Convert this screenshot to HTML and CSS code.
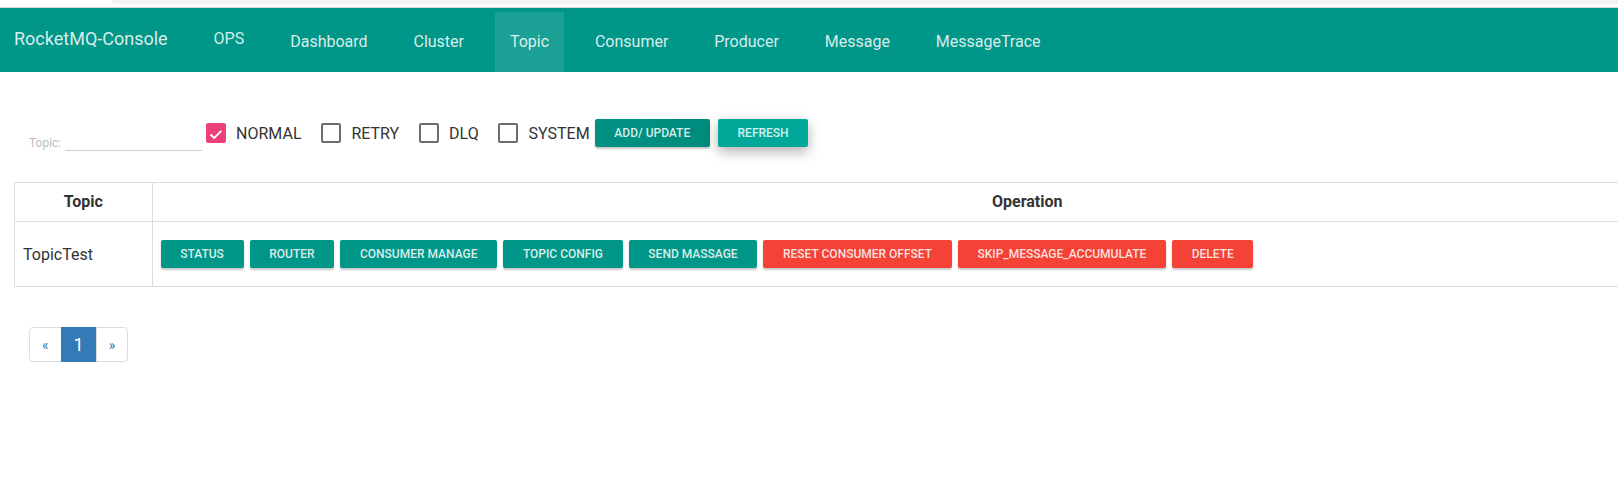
FILE: index.html
```html
<!DOCTYPE html>
<html lang="en">
<head>
<meta charset="utf-8">
<title>RocketMQ-Console</title>
<link rel="stylesheet" href="styles.css">
</head>
<body>
<div class="chrome"><div class="chrome-tab"></div></div>
<nav class="navbar">
  <div class="brand">RocketMQ-Console</div>
  <a class="ops">OPS</a>
  <ul class="nav">
    <li><a>Dashboard</a></li>
    <li><a>Cluster</a></li>
    <li><a class="active">Topic</a></li>
    <li><a>Consumer</a></li>
    <li><a>Producer</a></li>
    <li><a>Message</a></li>
    <li><a>MessageTrace</a></li>
  </ul>
</nav>
<main class="content">
  <div class="filters">
    <div class="field"><label>Topic:</label><span class="input"></span></div>
    <label class="check"><span class="box checked"><svg viewBox="0 0 20 20" width="20" height="20"><polyline points="4.5,11.5 8.2,15 15.3,7.8" fill="none" stroke="#fff" stroke-width="1.8"/></svg></span>NORMAL</label>
    <label class="check"><span class="box"></span>RETRY</label>
    <label class="check"><span class="box"></span>DLQ</label>
    <label class="check last"><span class="box"></span>SYSTEM</label>
    <button class="btn btn-add">ADD/ UPDATE</button>
    <button class="btn btn-refresh">REFRESH</button>
  </div>
  <table class="topics">
    <colgroup><col class="col-topic"><col></colgroup>
    <thead>
      <tr><th>Topic</th><th>Operation</th></tr>
    </thead>
    <tbody>
      <tr>
        <td class="name">TopicTest</td>
        <td class="ops-cell">
          <div class="op-btns">
            <button class="btn">STATUS</button>
            <button class="btn">ROUTER</button>
            <button class="btn">CONSUMER MANAGE</button>
            <button class="btn">TOPIC CONFIG</button>
            <button class="btn">SEND MASSAGE</button>
            <button class="btn danger">RESET CONSUMER OFFSET</button>
            <button class="btn danger">SKIP_MESSAGE_ACCUMULATE</button>
            <button class="btn danger">DELETE</button>
          </div>
        </td>
      </tr>
    </tbody>
  </table>
  <ul class="pagination">
    <li><a class="first">«</a></li>
    <li><a class="active">1</a></li>
    <li><a class="last">»</a></li>
  </ul>
</main>
</body>
</html>
```

FILE: styles.css
```css
html, body {
  margin: 0;
  padding: 0;
  background: #fff;
  overflow: hidden;
  font-family: Roboto, "Liberation Sans", Arial, sans-serif;
}

.chrome {
  height: 8px;
  box-sizing: border-box;
  border-bottom: 1px solid #d6d6d6;
  padding-left: 112px;
}
.chrome-tab {
  height: 4px;
  background: #f1f3f4;
  border-bottom-left-radius: 6px;
}

.navbar {
  display: flex;
  align-items: flex-start;
  height: 64px;
  background: #009688;
  padding-left: 14px;
  color: rgba(255, 255, 255, 0.85);
}
.brand {
  width: 184.6px;
  flex-shrink: 0;
  font-size: 18px;
  line-height: 21px;
  padding-top: 20.3px;
}
.ops {
  padding: 21px 15px 0;
  font-size: 16px;
  line-height: 19px;
}
.nav {
  display: flex;
  gap: 15.9px;
  list-style: none;
  margin: 4px 0 0 16px;
  padding: 0;
}
.nav a {
  display: flex;
  align-items: center;
  height: 60px;
  box-sizing: border-box;
  padding: 0 15px 2px;
  font-size: 16px;
}
.nav a.active {
  background: rgba(255, 255, 255, 0.1);
}

.content {
  padding: 47px 0 0 14px;
}
.filters {
  display: flex;
  align-items: center;
  height: 28px;
  padding-left: 15px;
}
.field {
  display: flex;
  align-items: flex-end;
  align-self: flex-end;
  margin-bottom: -4px;
  margin-right: 4px;
}
.field label {
  font-size: 12px;
  line-height: 14px;
  color: #bdbdbd;
  margin: 0 3.5px 1.4px 0;
}
.field .input {
  width: 137px;
  height: 20px;
  border-bottom: 1px solid #cfcfcf;
}
.check {
  display: flex;
  align-items: center;
  gap: 10.3px;
  margin-right: 19.6px;
  font-size: 16px;
  color: #333;
}
.check.last {
  margin-right: 5px;
}
.box {
  display: block;
  width: 20px;
  height: 20px;
  box-sizing: border-box;
  border: 2px solid #6e6e6e;
  border-radius: 2px;
}
.box.checked {
  background: #ec407a;
  border: 0;
}
.box svg {
  display: block;
}

.btn {
  height: 28px;
  padding: 0 19.7px;
  border: 0;
  border-radius: 2px;
  font-family: Roboto, "Liberation Sans", Arial, sans-serif;
  font-size: 12px;
  font-weight: 500;
  color: rgba(255, 255, 255, 0.85);
  background: #009688;
  box-shadow: 0 2px 2px rgba(0, 0, 0, 0.22);
  white-space: nowrap;
}
.btn.danger {
  background: #f44336;
}
.btn-add {
  background: linear-gradient(90deg, #009282, #008b7d);
  margin-right: 8px;
}
.btn-refresh {
  background: #00a899;
  box-shadow: 0 5px 11px rgba(0, 0, 0, 0.18), 0 4px 15px rgba(0, 0, 0, 0.15);
}

.topics {
  margin-top: 35px;
  border-collapse: collapse;
  table-layout: fixed;
  width: 1889px;
  color: #333;
}
.col-topic {
  width: 137.5px;
}
.topics th {
  padding: 8px;
  font-size: 16px;
  line-height: 22px;
  font-weight: 700;
  border: 1px solid #ddd;
  text-align: center;
}
.topics td {
  border: 1px solid #ddd;
  font-size: 16px;
}
.topics td.name {
  padding: 0 8px;
}
.topics td.ops-cell {
  padding: 18px 8px;
}
.op-btns {
  display: flex;
  gap: 6px;
}

.pagination {
  display: flex;
  list-style: none;
  padding: 0;
  margin: 40px 0 0 15px;
}
.pagination a {
  display: flex;
  align-items: center;
  justify-content: center;
  height: 35px;
  box-sizing: border-box;
  padding: 0 12px;
  border: 1px solid #ddd;
  margin-left: -1px;
  color: #337ab7;
  font-size: 14px;
  background: #fff;
}
.pagination a.first {
  margin-left: 0;
  border-radius: 4px 0 0 4px;
}
.pagination a.last {
  border-radius: 0 4px 4px 0;
}
.pagination a.active {
  background: #337ab7;
  border-color: #337ab7;
  color: #fff;
  font-size: 18px;
}
```
